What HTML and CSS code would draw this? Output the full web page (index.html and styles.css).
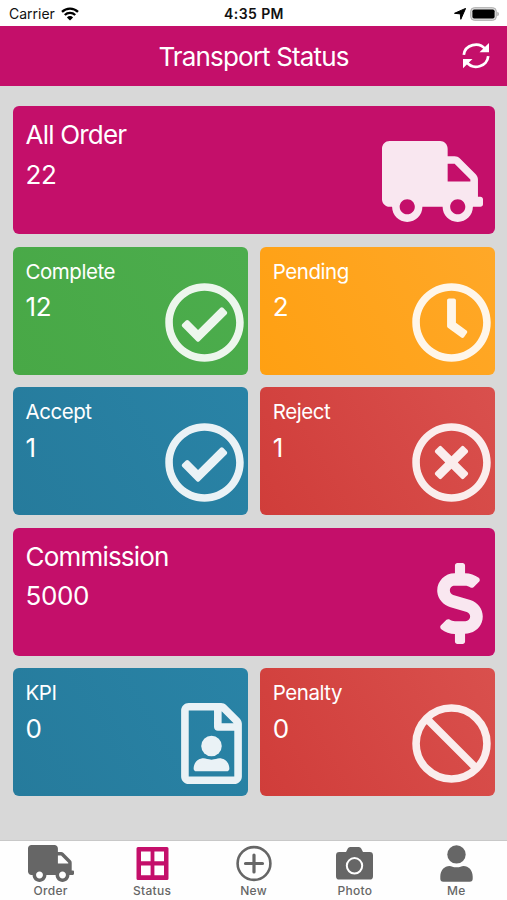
FILE: index.html
```html
<!DOCTYPE html>
<html lang="en">
<head>
    <meta charset="UTF-8">
    <meta name="viewport" content="width=device-width, initial-scale=1.0">
    <title>Transport Status</title>
    <link rel="stylesheet" href="styles.css">
</head>
<body>
    <!-- Shared icons -->
    <svg class="icon-defs" width="0" height="0">
        <symbol id="truck" viewBox="0 0 640 512">
            <path d="M624 352h-16V243.900c0-12.700-5.100-24.900-14.100-33.900L494 110.100c-9-9-21.200-14.100-33.900-14.100H416V48c0-26.500-21.500-48-48-48H48C21.500 0 0 21.500 0 48v320c0 26.500 21.500 48 48 48h16c0 53 43 96 96 96s96-43 96-96h128c0 53 43 96 96 96s96-43 96-96h48c8.800 0 16-7.200 16-16v-32c0-8.800-7.200-16-16-16zM160 464c-26.500 0-48-21.500-48-48s21.500-48 48-48 48 21.500 48 48-21.500 48-48 48zm320 0c-26.500 0-48-21.500-48-48s21.500-48 48-48 48 21.500 48 48-21.500 48-48 48zm80-208H416V144h44.100l99.900 99.900V256z"/>
        </symbol>
        <symbol id="check" viewBox="0 0 512 512">
            <path d="M256 8C119.033 8 8 119.033 8 256s111.033 248 248 248 248-111.033 248-248S392.967 8 256 8zm0 48c110.532 0 200 89.451 200 200 0 110.532-89.451 200-200 200-110.532 0-200-89.451-200-200 0-110.532 89.451-200 200-200m140.204 130.267l-22.536-22.718c-4.667-4.705-12.265-4.736-16.970-.068L215.346 303.697l-59.792-60.277c-4.667-4.705-12.265-4.736-16.970-.069l-22.719 22.536c-4.705 4.667-4.736 12.265-.068 16.971l90.781 91.516c4.667 4.705 12.265 4.736 16.970.068l172.589-171.204c4.704-4.668 4.734-12.266.067-16.971z"/>
        </symbol>
    </svg>

    <div class="status-bar">
        <div class="carrier">
            <span>Carrier</span>
            <svg width="18" height="14" viewBox="0 0 18 14">
                <path d="M1 4.900a11.500 11.500 0 0 1 16 0M3.800 8a7.400 7.400 0 0 1 10.400 0" fill="none" stroke="#000" stroke-width="2.300"/>
                <path d="M9 13.500L5.900 10.400a4.400 4.400 0 0 1 6.200 0z"/>
            </svg>
        </div>
        <div class="time">4:35 PM</div>
        <div class="indicators">
            <svg width="12" height="12" viewBox="0 0 12 12"><path d="M11.600.4L6.800 11.300 6.300 5.900.500 5.300z" stroke="#000" stroke-width="1" stroke-linejoin="round"/></svg>
            <svg width="29" height="14" viewBox="0 0 29 14">
                <rect x=".7" y=".7" width="25.600" height="12.600" rx="3.600" fill="#ddd" stroke="#aaa"/>
                <rect x="2.400" y="2.400" width="22.200" height="9.200" rx="1.800"/>
                <path d="M27.300 4.800a2.300 2.300 0 0 1 0 4.400z" fill="#aaa"/>
            </svg>
        </div>
    </div>

    <header class="header">
        <h1>Transport Status</h1>
        <svg class="refresh" width="28" height="28" viewBox="0 0 28 28">
            <path d="M1.800 12.800A12 11.300 0 0 1 23.400 7.300M26.200 14.200A12 11.300 0 0 1 4.600 20.200" fill="none" stroke="#fff" stroke-width="2.700"/>
            <path d="M27 1v9.300h-9.500zM1 26.300V17h9.500z" fill="#fff"/>
        </svg>
    </header>

    <main class="cards">
        <div class="card wide pink">
            <div class="title">All Order</div>
            <div class="value">22</div>
            <svg class="card-icon" width="101" height="81"><use href="#truck"/></svg>
        </div>
        <div class="card green">
            <div class="title">Complete</div>
            <div class="value">12</div>
            <svg class="card-icon" width="81" height="81"><use href="#check"/></svg>
        </div>
        <div class="card orange">
            <div class="title">Pending</div>
            <div class="value">2</div>
            <svg class="card-icon" width="81" height="81" viewBox="0 0 512 512">
                <path d="M256 8C119 8 8 119 8 256s111 248 248 248 248-111 248-248S393 8 256 8zm0 448c-110.500 0-200-89.500-200-200S145.500 56 256 56s200 89.500 200 200-89.500 200-200 200zm61.800-104.400l-84.900-61.700c-3.100-2.300-4.900-5.900-4.900-9.700V116c0-6.600 5.400-12 12-12h32c6.600 0 12 5.400 12 12v141.700l66.800 48.600c5.400 3.900 6.500 11.400 2.600 16.800L334.600 349c-3.900 5.300-11.400 6.500-16.800 2.600z"/>
            </svg>
        </div>
        <div class="card blue">
            <div class="title">Accept</div>
            <div class="value">1</div>
            <svg class="card-icon" width="81" height="81"><use href="#check"/></svg>
        </div>
        <div class="card red">
            <div class="title">Reject</div>
            <div class="value">1</div>
            <svg class="card-icon" width="81" height="81" viewBox="0 0 512 512">
                <path d="M256 8C119 8 8 119 8 256s111 248 248 248 248-111 248-248S393 8 256 8zm0 448c-110.500 0-200-89.500-200-200S145.500 56 256 56s200 89.500 200 200-89.500 200-200 200zm101.800-262.200L295.600 256l62.200 62.200c4.700 4.700 4.700 12.300 0 17l-22.600 22.600c-4.700 4.700-12.300 4.700-17 0L256 295.600l-62.200 62.200c-4.700 4.700-12.300 4.700-17 0l-22.600-22.600c-4.700-4.700-4.700-12.300 0-17l62.200-62.200-62.200-62.200c-4.700-4.700-4.700-12.300 0-17l22.600-22.600c4.700-4.700 12.300-4.700 17 0l62.200 62.200 62.200-62.200c4.700-4.700 12.300-4.700 17 0l22.600 22.600c4.700 4.700 4.700 12.300 0 17z"/>
            </svg>
        </div>
        <div class="card wide pink">
            <div class="title">Commission</div>
            <div class="value">5000</div>
            <svg class="card-icon" width="46" height="81" viewBox="0 0 288 512">
                <path d="M209.200 233.400l-108-31.600C88.700 198.200 80 186.500 80 173.500c0-16.300 13.200-29.500 29.500-29.500h66.300c12.200 0 24.200 3.700 34.200 10.500 6.100 4.100 14.300 3.100 19.500-2l34.800-34c7.100-6.900 6.100-18.400-1.800-24.500C238 74.800 207.400 64.100 176 64V16c0-8.800-7.200-16-16-16h-32c-8.800 0-16 7.200-16 16v48h-2.500C45.800 64-5.400 118.700.5 183.600c4.200 46.100 39.400 83.600 83.800 96.600l102.500 30c12.500 3.700 21.200 15.300 21.200 28.300 0 16.300-13.200 29.500-29.500 29.500h-66.300C100 368 88 364.300 78 357.500c-6.100-4.100-14.300-3.100-19.500 2l-34.800 34c-7.100 6.900-6.100 18.400 1.800 24.500 24.500 19.200 55.100 29.900 86.500 30v48c0 8.800 7.200 16 16 16h32c8.800 0 16-7.200 16-16v-48.200c46.600-.9 90.300-28.600 105.700-72.700 21.500-61.600-14.600-124.800-72.500-141.700z"/>
            </svg>
        </div>
        <div class="card blue">
            <div class="title">KPI</div>
            <div class="value">0</div>
            <svg class="card-icon file-icon" width="61" height="81" viewBox="0 0 384 512">
                <path d="M369.900 97.900L286 14C277 5 264.800 0 252.100 0H48C21.500 0 0 21.500 0 48v416c0 26.500 21.500 48 48 48h288c26.500 0 48-21.500 48-48V131.900c0-12.700-5.100-25-14.100-34zM332.100 128H256V51.900l76.100 76.100zM48 464V48h160v104c0 13.300 10.700 24 24 24h104v288H48z"/>
                <circle cx="192" cy="272" r="65"/>
                <path d="M79 414c0-38 30-64 63-64 16 0 26 8 50 8s34-8 50-8c33 0 63 26 63 64 0 11-7 18-18 18H97c-11 0-18-7-18-18z"/>
            </svg>
        </div>
        <div class="card red">
            <div class="title">Penalty</div>
            <div class="value">0</div>
            <svg class="card-icon" width="81" height="81" viewBox="0 0 512 512">
                <path d="M480 256a224 224 0 1 1-448 0 224 224 0 0 1 448 0zM98 98l316 316" fill="none" stroke="#fff" stroke-width="48"/>
            </svg>
        </div>
    </main>

    <nav class="tabs">
        <a class="tab">
            <svg width="46" height="37"><use href="#truck"/></svg>
            <span>Order</span>
        </a>
        <a class="tab active">
            <svg width="33" height="37" viewBox="0 0 33 37">
                <path fill-rule="evenodd" d="M2 2h29a1.500 1.500 0 0 1 1.500 1.500v30A1.500 1.500 0 0 1 31 35H2A1.500 1.500 0 0 1 .5 33.500v-30A1.500 1.500 0 0 1 2 2zM5 6.500v9.700h9.600V6.500zM18.400 6.500v9.700H28V6.500zM5 20.600v9.700h9.600v-9.700zM18.400 20.600v9.700H28v-9.700z"/>
            </svg>
            <span>Status</span>
        </a>
        <a class="tab">
            <svg width="36" height="37" viewBox="0 0 36 37">
                <circle cx="18" cy="18.500" r="16.400" fill="none" stroke="#666" stroke-width="2.600"/>
                <path d="M18 10v17M9.500 18.500h17" stroke="#666" stroke-width="3.200" stroke-linecap="round"/>
            </svg>
            <span>New</span>
        </a>
        <a class="tab">
            <svg width="37" height="37" viewBox="0 0 37 37">
                <path d="M3.500 7H10l1.800-3.500A2.600 2.600 0 0 1 14.200 2h8.600a2.600 2.600 0 0 1 2.400 1.500L27 7h6.500A3.400 3.400 0 0 1 37 10.400v20.800a3.400 3.400 0 0 1-3.500 3.400h-30A3.400 3.400 0 0 1 0 31.200V10.400A3.400 3.400 0 0 1 3.500 7z"/>
                <circle cx="18.500" cy="20.800" r="7.700" fill="none" stroke="#fff" stroke-width="2"/>
            </svg>
            <span>Photo</span>
        </a>
        <a class="tab">
            <svg width="33" height="37" viewBox="0 0 33 37">
                <circle cx="16.500" cy="9.400" r="9.200"/>
                <path d="M.3 31.500C.3 25 4.500 20.900 9.500 20.900c2 0 3.500 1.400 7 1.400s5-1.400 7-1.400c5 0 9.200 4.100 9.200 10.600v2.300a3 3 0 0 1-3 3H3.300a3 3 0 0 1-3-3z"/>
            </svg>
            <span>Me</span>
        </a>
    </nav>
</body>
</html>
```
FILE: styles.css
```css
* {
    box-sizing: border-box;
}

body {
    margin: 0;
    height: 900px;
    display: flex;
    flex-direction: column;
    background-color: #d8d8d8;
    font-family: Inter, "Liberation Sans", sans-serif;
    overflow: hidden;
}

svg {
    display: block;
}

.icon-defs {
    position: absolute;
}

/* Status bar */
.status-bar {
    height: 26px;
    flex: none;
    display: grid;
    grid-template-columns: 1fr auto 1fr;
    align-items: center;
    padding: 1px 8px 0 9px;
    background-color: #fff;
    color: #111;
    font-size: 14px;
}

.carrier,
.indicators {
    display: flex;
    align-items: center;
    gap: 6px;
}

.indicators {
    justify-content: flex-end;
    gap: 4px;
}

.time {
    font-weight: 600;
    letter-spacing: 0.4px;
}

/* Header */
.header {
    height: 60px;
    flex: none;
    display: grid;
    grid-template-columns: 1fr auto 1fr;
    align-items: center;
    background-color: #c40f6a;
    color: #fff;
}

.header h1 {
    grid-column: 2;
    margin: 0;
    font-size: 26px;
    font-weight: 400;
    letter-spacing: -0.85px;
}

.refresh {
    justify-self: end;
    margin-right: 17px;
}

/* Cards */
.cards {
    flex: 1;
    display: grid;
    grid-template-columns: 1fr 1fr;
    grid-auto-rows: 128px;
    gap: 12.5px;
    padding: 20px 12px 0 13px;
}

.card {
    position: relative;
    padding: 13px 12.5px;
    border-radius: 6px;
    color: #fff;
}

.wide {
    grid-column: span 2;
}

.title {
    font-size: 20.5px;
    line-height: 24px;
    letter-spacing: -0.45px;
}

.wide .title {
    font-size: 26px;
    line-height: 32px;
    letter-spacing: -0.8px;
}

.value {
    margin-top: 7.5px;
    font-size: 26px;
    line-height: 32px;
    letter-spacing: -0.4px;
}

.card-icon {
    position: absolute;
    right: 3px;
    bottom: 12px;
    fill: #fff;
    opacity: 0.9;
}

.wide .card-icon {
    right: 12.5px;
}

.card .file-icon {
    right: 6px;
}

.pink {
    background-color: #c40f6a;
}

.green {
    background: linear-gradient(60deg, #48a846, #4cad4d);
}

.orange {
    background: linear-gradient(60deg, #ffa012, #ffa828);
}

.blue {
    background: linear-gradient(60deg, #267b9c, #2983a6);
}

.red {
    background: linear-gradient(60deg, #d03d3a, #d9504d);
}

/* Tab bar */
.tabs {
    height: 60px;
    flex: none;
    display: flex;
    border-top: 1px solid #c8c8c8;
    background-color: #fefefe;
}

.tab {
    flex: 1;
    display: flex;
    flex-direction: column;
    align-items: center;
    padding-top: 4px;
    color: #666;
    fill: #666;
    font-size: 12px;
    font-weight: 500;
    line-height: 16px;
    letter-spacing: 0.3px;
}

.tab span {
    margin-top: 1px;
}

.active {
    fill: #c40f6a;
}
```
